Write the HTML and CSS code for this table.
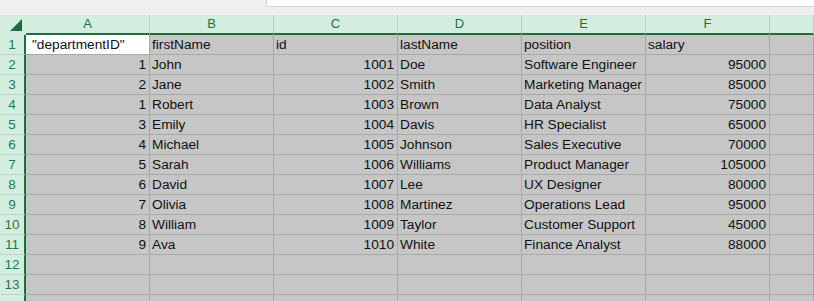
FILE: index.html
```html
<!DOCTYPE html>
<html lang="en">
<head>
    <meta charset="UTF-8">
    <meta name="viewport" content="width=device-width, initial-scale=1.0">
    <title>employees.csv</title>
    <link rel="stylesheet" href="styles.css">
</head>
<body>
    <!-- Strip above the grid with the formula box -->
    <div class="topbar">
        <div class="formula-box"></div>
    </div>

    <div class="sheet">
        <!-- Column headers -->
        <div class="row head-row">
            <div class="corner">
                <svg width="12" height="12" viewBox="0 0 12 12"><polygon points="12,0 12,12 0,12" fill="#1d6b40"/></svg>
            </div>
            <div class="col-head">A</div>
            <div class="col-head">B</div>
            <div class="col-head">C</div>
            <div class="col-head">D</div>
            <div class="col-head">E</div>
            <div class="col-head">F</div>
            <div class="col-head"></div>
        </div>

        <div class="row">
            <div class="row-head">1</div>
            <div class="cell active">"departmentID"</div>
            <div class="cell">firstName</div>
            <div class="cell">id</div>
            <div class="cell">lastName</div>
            <div class="cell">position</div>
            <div class="cell">salary</div>
            <div class="cell"></div>
        </div>
        <div class="row">
            <div class="row-head">2</div>
            <div class="cell num">1</div>
            <div class="cell">John</div>
            <div class="cell num">1001</div>
            <div class="cell">Doe</div>
            <div class="cell">Software Engineer</div>
            <div class="cell num">95000</div>
            <div class="cell"></div>
        </div>
        <div class="row">
            <div class="row-head">3</div>
            <div class="cell num">2</div>
            <div class="cell">Jane</div>
            <div class="cell num">1002</div>
            <div class="cell">Smith</div>
            <div class="cell">Marketing Manager</div>
            <div class="cell num">85000</div>
            <div class="cell"></div>
        </div>
        <div class="row">
            <div class="row-head">4</div>
            <div class="cell num">1</div>
            <div class="cell">Robert</div>
            <div class="cell num">1003</div>
            <div class="cell">Brown</div>
            <div class="cell">Data Analyst</div>
            <div class="cell num">75000</div>
            <div class="cell"></div>
        </div>
        <div class="row">
            <div class="row-head">5</div>
            <div class="cell num">3</div>
            <div class="cell">Emily</div>
            <div class="cell num">1004</div>
            <div class="cell">Davis</div>
            <div class="cell">HR Specialist</div>
            <div class="cell num">65000</div>
            <div class="cell"></div>
        </div>
        <div class="row">
            <div class="row-head">6</div>
            <div class="cell num">4</div>
            <div class="cell">Michael</div>
            <div class="cell num">1005</div>
            <div class="cell">Johnson</div>
            <div class="cell">Sales Executive</div>
            <div class="cell num">70000</div>
            <div class="cell"></div>
        </div>
        <div class="row">
            <div class="row-head">7</div>
            <div class="cell num">5</div>
            <div class="cell">Sarah</div>
            <div class="cell num">1006</div>
            <div class="cell">Williams</div>
            <div class="cell">Product Manager</div>
            <div class="cell num">105000</div>
            <div class="cell"></div>
        </div>
        <div class="row">
            <div class="row-head">8</div>
            <div class="cell num">6</div>
            <div class="cell">David</div>
            <div class="cell num">1007</div>
            <div class="cell">Lee</div>
            <div class="cell">UX Designer</div>
            <div class="cell num">80000</div>
            <div class="cell"></div>
        </div>
        <div class="row">
            <div class="row-head">9</div>
            <div class="cell num">7</div>
            <div class="cell">Olivia</div>
            <div class="cell num">1008</div>
            <div class="cell">Martinez</div>
            <div class="cell">Operations Lead</div>
            <div class="cell num">95000</div>
            <div class="cell"></div>
        </div>
        <div class="row">
            <div class="row-head">10</div>
            <div class="cell num">8</div>
            <div class="cell">William</div>
            <div class="cell num">1009</div>
            <div class="cell">Taylor</div>
            <div class="cell">Customer Support</div>
            <div class="cell num">45000</div>
            <div class="cell"></div>
        </div>
        <div class="row">
            <div class="row-head">11</div>
            <div class="cell num">9</div>
            <div class="cell">Ava</div>
            <div class="cell num">1010</div>
            <div class="cell">White</div>
            <div class="cell">Finance Analyst</div>
            <div class="cell num">88000</div>
            <div class="cell"></div>
        </div>
        <div class="row">
            <div class="row-head">12</div>
            <div class="cell"></div>
            <div class="cell"></div>
            <div class="cell"></div>
            <div class="cell"></div>
            <div class="cell"></div>
            <div class="cell"></div>
            <div class="cell"></div>
        </div>
        <div class="row">
            <div class="row-head">13</div>
            <div class="cell"></div>
            <div class="cell"></div>
            <div class="cell"></div>
            <div class="cell"></div>
            <div class="cell"></div>
            <div class="cell"></div>
            <div class="cell"></div>
        </div>
        <!-- next row, only its top edge is in view -->
        <div class="row">
            <div class="row-head"></div>
            <div class="cell"></div>
            <div class="cell"></div>
            <div class="cell"></div>
            <div class="cell"></div>
            <div class="cell"></div>
            <div class="cell"></div>
            <div class="cell"></div>
        </div>
    </div>
</body>
</html>
```

FILE: styles.css
```css
/* Reset */
* {
    margin: 0;
    padding: 0;
    box-sizing: border-box;
}

body {
    font-family: 'Liberation Sans', Arial, sans-serif;
    background-color: #efefef;
    overflow: hidden;
    height: 301px;
}

/* Top strip */
.topbar {
    height: 15px;
    background-color: #efefef;
}

.formula-box {
    margin-left: 266px;
    height: 7px;
    background-color: #fff;
    border-left: 1px solid #d4d4d4;
    border-bottom: 1px solid #d4d4d4;
    border-bottom-left-radius: 4px;
}

/* Grid */
.row {
    display: grid;
    grid-template-columns: 26px repeat(6, 124px) 1fr;
}

.corner {
    height: 20px;
    background-color: #d3eede;
    display: flex;
    justify-content: flex-end;
    align-items: flex-end;
    padding: 0 4px 4px 0;
}

.col-head {
    height: 20px;
    background-color: #d3eede;
    border-right: 1px solid #bccfc3;
    border-bottom: 2px solid #1e6e42;
    color: #1e7145;
    font-size: 13px;
    line-height: 18px;
    text-align: center;
}

.row-head {
    height: 20px;
    background-color: #d3eede;
    border-right: 2px solid #1e6e42;
    border-bottom: 1px solid #bfd3c6;
    color: #1e7a55;
    font-size: 13.5px;
    line-height: 20px;
    text-align: center;
}

.cell {
    height: 20px;
    background-color: #c6c6c6;
    border-right: 1px solid #a9a9a9;
    border-bottom: 1px solid #a9a9a9;
    padding: 0 3px 0 2px;
    font-size: 13.7px;
    line-height: 20px;
    color: #111;
    white-space: nowrap;
    overflow: hidden;
}

.cell.num {
    text-align: right;
}

.cell.active {
    background-color: #fff;
    padding-left: 6px;
}
```
